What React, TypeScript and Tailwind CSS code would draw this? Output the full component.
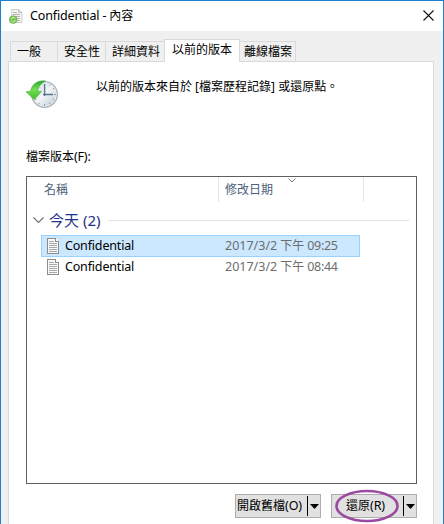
import React from "react";

const PageIcon = ({ className }: { className?: string }) => (
  <svg width="12" height="16" viewBox="0 0 12 16" shapeRendering="crispEdges" className={className}>
    <path d="M.5 .5h8l3 3v12h-11z" fill="#fafafa" stroke="#8c8c8c" />
    <path d="M8.500 .5v3h3" fill="#fff" stroke="#8c8c8c" />
    <path d="M2 3.500h5M2 5.500h8M2 7.500h8M2 9.500h8M2 11.500h8M2 13.500h8" stroke="#a8a8a8" />
  </svg>
);

const TitleIcon = () => (
  <svg width="15" height="17" viewBox="0 0 15 17">
    <path d="M2.500 1.500h7.500l3 3v10h-10.500z" fill="#f3f3f3" stroke="#cfcfcf" />
    <path d="M9.500 1.500v3h3.500" fill="#ddd" stroke="#c2c2c2" />
    <path d="M4 4.500h4M4 6.500h7M4 8.500h7M6 10.500h5M8 12.500h3" stroke="#b5b5b5" />
    <circle cx="4.200" cy="11.600" r="3.900" fill="#7fc65a" stroke="#5faa42" strokeWidth=".6" />
    <path d="M2.200 11a2.100 2.100 0 0 1 3.800-.8M6.200 12.200a2.100 2.100 0 0 1-3.800.8" fill="none" stroke="#d3efb4" strokeWidth="1" />
  </svg>
);

const HistoryIcon = () => (
  <svg width="33" height="30" viewBox="0 0 33 30">
    <defs>
      <linearGradient id="face" x1="0" y1="0" x2="1" y2="1">
        <stop offset="0" stopColor="#c9d3dc" />
        <stop offset=".5" stopColor="#f0f4f7" />
        <stop offset="1" stopColor="#b9c5ce" />
      </linearGradient>
      <linearGradient id="arrow" x1="0" y1="0" x2="0" y2="1">
        <stop offset="0" stopColor="#2ba52e" />
        <stop offset=".45" stopColor="#74de52" />
        <stop offset="1" stopColor="#42bd2b" />
      </linearGradient>
    </defs>
    <circle cx="18.600" cy="15.500" r="12.800" fill="url(#face)" stroke="#aeb5b9" strokeWidth="1.300" />
    <circle cx="18.600" cy="15.500" r="11.600" fill="none" stroke="#e7ecef" />
    <path d="M18.600 25v2M28 15.500h2M13.500 23.800l-.8 1.400M23.500 23.800l.8 1.400M10.500 20l-1.300.7M26.800 20l1.300.7M26.800 10l1.300-.7M23.500 6.500l.7-1.300" stroke="#879ba8" />
    <path d="M18.600 5v12M17 15.500h10" stroke="#58758a" strokeWidth="1.300" fill="none" />
    <path d="M19.500 2C12 1 5.800 5 4.600 12.200L0 12.800 8.200 20.500 15.600 12.400 11.400 12.400C12 8 15 4.500 19.500 2z" fill="url(#arrow)" stroke="#42ad38" strokeWidth=".6" />
  </svg>
);

const tabs = [
  { label: "一般", box: "w-[47px] pl-[6px]" },
  { label: "安全性", box: "w-[48px] pl-[6px]" },
  { label: "詳細資料", box: "w-[59px] pl-[6px]" },
];

const rows = [
  { time: "09:25", selected: true },
  { time: "08:44", selected: false },
];

const SplitButton = ({ label, letter, circled }: { label: string; letter: string; circled?: boolean }) => (
  <div className="relative flex h-6 w-[86px] border border-[#adadad] bg-[#e1e1e1]">
    <div className="flex h-full w-[71px] items-center justify-center pr-[4px]">
      <span>{label}</span>
      <span className="text-[12.500px] tracking-[-0.1px]">({letter})</span>
    </div>
    <div className="my-px w-px bg-black" />
    <div className="flex flex-1 items-center justify-center">
      <svg width="9" height="5" viewBox="0 0 9 5">
        <path d="M0 0h9L4.500 5z" />
      </svg>
    </div>
    {circled && (
      <svg className="absolute left-[3px] top-[-6px]" width="64" height="34" viewBox="0 0 64 34">
        <ellipse cx="32" cy="17" rx="30.500" ry="15" fill="none" stroke="#9b4aa0" strokeWidth="2.600" />
      </svg>
    )}
  </div>
);

export default function App() {
  return (
    <div className="flex h-[524px] w-[444px] flex-col overflow-hidden whitespace-nowrap border-x border-t border-[#1a80d2] bg-[#f0f0f0] font-['Noto_Sans','Noto_Sans_CJK_TC',sans-serif] text-[12px] leading-4 text-black">
      <header className="flex h-[30px] shrink-0 items-center bg-white pl-2 pr-[9px]">
        <TitleIcon />
        <span className="ml-[6px] text-[12.500px] tracking-[-0.15px]">Confidential - </span>
        <span className="ml-[3px]">內容</span>
        <svg className="mb-px ml-auto" width="11" height="11" viewBox="0 0 11 11">
          <path d="M.5 .5l10 10M10.500 .5l-10 10" stroke="#111" strokeWidth="1.100" />
        </svg>
      </header>

      <nav className="flex h-[30px] shrink-0 items-end pl-[9px]">
        {tabs.map((t) => (
          <div key={t.label} className={`flex h-5 items-center border-l border-t border-[#d9d9d9] ${t.box}`}>
            {t.label}
          </div>
        ))}
        <div className="z-10 -mb-px flex h-[23px] w-[76px] items-start border-x border-t border-[#d9d9d9] bg-white pl-[7px] pt-[2px]">
          以前的版本
        </div>
        <div className="flex h-5 w-[56px] items-center border-r border-t border-[#d9d9d9] pl-[4px]">離線檔案</div>
      </nav>

      <main className="ml-[7px] flex w-[426px] flex-1 flex-col border-x border-t border-[#d9d9d9] bg-white pl-[17px]">
        <section className="mt-[17px] flex h-[30px] shrink-0">
          <HistoryIcon />
          <p className="ml-[37px]">以前的版本來自於 [檔案歷程記錄] 或還原點。</p>
        </section>
        <p className="mt-[40px] h-4">
          檔案版本<span className="text-[12.500px] tracking-[-0.2px]">(F):</span>
        </p>

        <section className="mt-[11px] h-[308px] w-[391px] shrink-0 border border-[#5f5f5f] bg-white">
          <div className="flex h-[25px] text-[#4c607a]">
            <div className="flex w-[192px] items-center border-r border-[#e5e5e5] pl-[17px]">名稱</div>
            <div className="relative flex w-[145px] items-center border-r border-[#e5e5e5] pl-[6px]">
              修改日期
              <svg className="absolute left-[69px] top-px" width="8" height="5" viewBox="0 0 8 5">
                <path d="M.5 .5L4 4 7.500 .5" fill="none" stroke="#777" />
              </svg>
            </div>
          </div>
          <div className="mt-[9px] flex h-[18px] items-center pl-[6px] pr-[7px] text-[15px] text-[#1e3287]">
            <svg width="11" height="7" viewBox="0 0 11 7">
              <path d="M.5 .5l5 5 5-5" fill="none" stroke="#707070" strokeWidth="1.200" />
            </svg>
            <span className="ml-[5px] w-[52px]">今天 (2)</span>
            <div className="ml-[7px] h-px flex-1 bg-[#e2e2e2]" />
          </div>
          <div className="mt-[6px] pl-[14px]">
            {rows.map((r) => (
              <div
                key={r.time}
                className={`flex w-[319px] items-center border pl-[5px] ${
                  r.selected ? "h-[22px] border-[#99d1ff] bg-[#cce8ff]" : "h-5 border-transparent"
                }`}
              >
                <PageIcon />
                <span className="ml-[6px] w-[160px] text-[12.500px] tracking-[-0.17px]">Confidential</span>
                <span className="text-[12.500px] text-[#6d6d6d]">2017/3/2</span>
                <span className="ml-[3px] text-[#6d6d6d]">下午</span>
                <span className="ml-[3px] text-[12.500px] tracking-[-0.3px] text-[#6d6d6d]">{r.time}</span>
              </div>
            ))}
          </div>
        </section>

        <footer className="mt-[10px] flex gap-[10px] pl-[209px]">
          <SplitButton label="開啟舊檔" letter="O" />
          <SplitButton label="還原" letter="R" circled />
        </footer>
      </main>
    </div>
  );
}
